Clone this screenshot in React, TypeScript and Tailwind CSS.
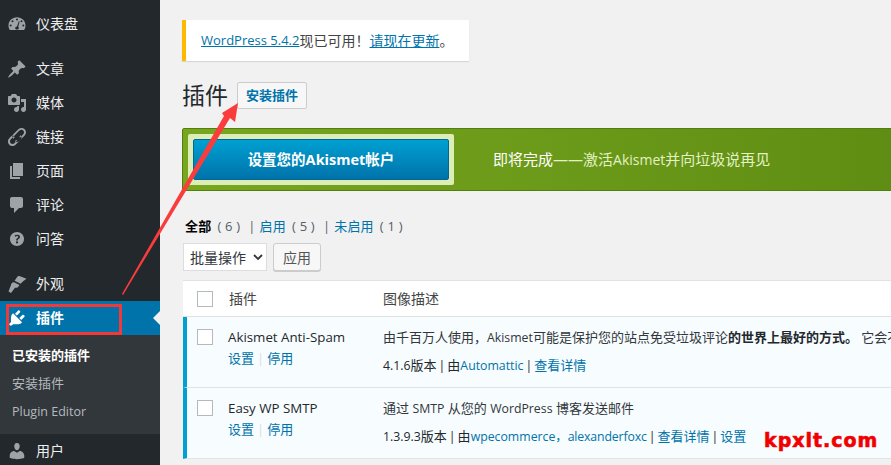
import type { ReactNode } from "react";

const font = { fontFamily: '"Open Sans","Noto Sans CJK SC",sans-serif' };

const icons: Record<string, ReactNode> = {
  dashboard: (
    <path
      fillRule="evenodd"
      d="M10 3.2c-4.7 0-8.5 3.6-8.5 8.2 0 1.7.5 3.2 1.4 4.5h14.2c.9-1.300 1.400-2.800 1.400-4.500 0-4.600-3.800-8.200-8.500-8.200zM10 4.500a1 1 0 110 2 1 1 0 010-2zM5.500 6.300a1 1 0 110 2 1 1 0 010-2zM14.500 6.300a1 1 0 110 2 1 1 0 010-2zM3.700 10.500a1 1 0 110 2 1 1 0 010-2zM16.300 10.500a1 1 0 110 2 1 1 0 010-2zM11.800 7.200l.9.4-1.500 5.200c.4.400.6.800.6 1.300 0 1-.8 1.500-1.800 1.500s-1.800-.5-1.800-1.500c0-.9.700-1.600 1.800-1.700z"
    />
  ),
  post: <path d="M10.440 3.020l1.820-1.820 6.360 6.350-1.830 1.820c-1.050-.68-2.480-.57-3.410.35l-.92.92c-.93.93-1.040 2.350-.35 3.400l-1.830 1.820-2.410-2.410-2.800 2.790c-.42.42-3.380 2.710-3.800 2.290s1.860-3.390 2.280-3.810l2.790-2.790L4.100 9.460l1.830-1.820c1.050.69 2.470.58 3.400-.35l.92-.92c.93-.93 1.040-2.360.35-3.410z" />,
  media: <path d="M13 11V4c0-.55-.45-1-1-1h-1.670L9 1H5L3.670 3H2c-.55 0-1 .45-1 1v7c0 .55.45 1 1 1h10c.55 0 1-.45 1-1zM7 4.500c1.380 0 2.500 1.120 2.500 2.500S8.380 9.500 7 9.500 4.500 8.380 4.500 7 5.620 4.500 7 4.500zM14 6h5v10.500c0 1.380-1.120 2.500-2.500 2.500S14 17.880 14 16.500s1.120-2.500 2.500-2.500c.17 0 .34.020.5.050V9h-3V6zm-4 8.050V13h2v3.500c0 1.380-1.120 2.500-2.500 2.500S7 17.880 7 16.500 8.120 14 9.500 14c.17 0 .34.020.5.050z" />,
  link: (
    <path
      fillRule="evenodd"
      d="M17.700 2.300c-1.900-1.900-4.700-1.700-6.600.2L6.300 7.300c-1.200 1.200-1.300 3.300 0 4.500l1.300-1.300c-.6-.7-.6-1.500 0-2.100l4.800-4.800c1.100-1.100 2.800-1.300 3.900-.2 1.100 1.200.9 2.900-.2 4l-5.300 5.300c-.6.600-1.200.7-1.700.3l-1.300 1.300c1.300 1.100 3.200.9 4.400-.3l5.300-5.300c1.900-1.900 2.100-4.500.2-6.400zM13.700 8.200c1.200 1.200 1.100 3.300-.1 4.500l-4.800 4.800c-1.900 1.900-4.700 2.100-6.600.2s-1.600-4.800.3-6.700l3-3 1.400 1.300-3 3c-1.100 1.100-1.300 2.800-.2 4 1.100 1.100 2.800.9 3.900-.2l4.800-4.800c.6-.6.600-1.400 0-2.100z"
    />
  ),
  page: <path d="M6 15V2h10v13H6zm-1 1h8v2H3V5h2v11z" />,
  comment: <path d="M5 2h9c1.100 0 2 .9 2 2v7c0 1.100-.9 2-2 2h-2l-5 5v-5H5c-1.100 0-2-.9-2-2V4c0-1.100.9-2 2-2z" />,
  help: <path d="M17 10c0-3.870-3.140-7-7-7-3.870 0-7 3.130-7 7 0 3.860 3.130 7 7 7 3.860 0 7-3.140 7-7zm-6.300 1.480H9.140v-.43c0-.38.08-.7.24-.98s.46-.57.88-.89c.41-.29.68-.53.81-.71.14-.18.2-.39.2-.62 0-.25-.09-.44-.28-.58-.19-.13-.45-.19-.79-.19-.58 0-1.250.19-2 .57l-.64-1.280c.87-.49 1.800-.74 2.770-.74.81 0 1.450.2 1.920.58.48.39.71.91.71 1.550 0 .44-.1.81-.3 1.120-.19.32-.57.67-1.110 1.060-.38.28-.61.49-.71.63-.1.15-.14.34-.14.59v.32zm-1.420 2.650c-.18-.18-.28-.43-.28-.75 0-.33.09-.59.27-.76s.44-.26.79-.26c.34 0 .6.09.78.27.18.18.27.43.27.75 0 .31-.09.56-.28.74-.18.19-.44.28-.77.28-.34 0-.6-.09-.78-.27z" />,
  appearance: <path d="M19.500 4.800L13 2.200c-1.300-.4-2.400.1-3 1L7.600 6.800 13.700 9.800l2.100-2.300zM7 8.300c-1.600-.1-2.700 1-3 2.600L1.500 17.500 4 19l4-5.300c1.300.4 2.700 0 3.700-1.400l.8-1.200z" />,
  plugin: <path d="M13.110 4.360L9.870 7.600 8 5.730l3.240-3.240c.35-.34 1.050-.2 1.560.32.52.51.66 1.210.31 1.550zm-8 1.770l.91-.91 9.010 9.010-.91.91c-.71.710-2.630 1.160-3.820 1.160H6.140L4.900 17.260c-.59.590-1.540.59-2.120 0-.59-.58-.59-1.530 0-2.120l1.240-1.240v-4.160c0-1.130.4-3.050 1.090-3.610zm7.260 3.970l3.240-3.240c.34-.35 1.040-.21 1.550.31.52.51.66 1.210.31 1.550l-3.240 3.250z" />,
  users: <path d="M10 9.250c-2.270 0-2.730-3.440-2.730-3.440C7 4.020 7.820 2 9.970 2c2.160 0 2.980 2.020 2.710 3.810 0 0-.41 3.440-2.680 3.440zm0 2.570L12.720 10c2.390 0 4.520 2.330 4.520 4.530v2.490s-3.650 1.130-7.240 1.130c-3.650 0-7.240-1.130-7.240-1.130v-2.490c0-2.250 1.940-4.530 4.430-4.530z" />,
};

function Icon({ name, className }: { name: string; className: string }) {
  return (
    <svg viewBox="0 0 20 20" className={className} fill="currentColor">
      {icons[name]}
    </svg>
  );
}

// the reference sets Chinese slightly larger than the latin next to it
function Zh({ children }: { children: ReactNode }) {
  return <span className="text-[13px]">{children}</span>;
}

function En({ children }: { children: ReactNode }) {
  return <span className="text-[12.3px]">{children}</span>;
}

function Sep() {
  return <span className="mx-[2px]">|</span>;
}

function MenuItem({ icon, label, mt }: { icon: string; label: string; mt?: string }) {
  return (
    <div className={`flex h-[34px] shrink-0 items-center text-[14px] text-[#eeeeee] ${mt ?? ""}`}>
      <Icon name={icon} className="ml-[7px] mr-[9px] h-[20px] w-[20px] text-[#9ea3a8]" />
      <span className="pb-[2px]">{label}</span>
    </div>
  );
}

function Sidebar() {
  return (
    <aside className="flex h-full w-[160px] shrink-0 flex-col bg-[#23282d] pt-[7px]">
      <MenuItem icon="dashboard" label="仪表盘" />
      <MenuItem icon="post" label="文章" mt="mt-[11px]" />
      <MenuItem icon="media" label="媒体" />
      <MenuItem icon="link" label="链接" />
      <MenuItem icon="page" label="页面" />
      <MenuItem icon="comment" label="评论" />
      <MenuItem icon="help" label="问答" />
      <MenuItem icon="appearance" label="外观" mt="mt-[11px]" />
      <div className="relative flex h-[34px] shrink-0 items-center bg-[#0073aa] text-[14px] font-bold text-white">
        <Icon name="plugin" className="ml-[7px] mr-[9px] h-[20px] w-[20px] text-white" />
        <span className="pb-[2px]">插件</span>
        <span className="absolute right-0 top-[10px] h-0 w-0 border-y-[7px] border-r-[7px] border-y-transparent border-r-[#f1f1f1]" />
      </div>
      <div className="flex h-[99px] shrink-0 flex-col bg-[#32373c] pl-[12px] pt-[6px] text-[13px] leading-[28px] text-[#b4b9be]">
        <span className="font-bold text-white">已安装的插件</span>
        <span>安装插件</span>
        <span className="mt-[1px] text-[12.5px]">Plugin Editor</span>
      </div>
      <MenuItem icon="users" label="用户" />
    </aside>
  );
}

function Checkbox() {
  return <span className="block h-[16px] w-[16px] shrink-0 border border-[#b4b9be] bg-white" />;
}

function PluginRow({
  name,
  desc,
  meta,
}: {
  name: string;
  desc: ReactNode;
  meta: ReactNode;
}) {
  return (
    <div className="flex h-[71px] border-b border-[#e1e4e8] border-l-4 border-l-[#00a0d2] bg-[#f7fcfe]">
      <div className="ml-[10px] mt-[12px]">
        <Checkbox />
      </div>
      <div className="ml-[15px] w-[155px] shrink-0 pt-[10px]">
        <div className="text-[13.3px] font-medium leading-[20px] text-[#23282d]">{name}</div>
        <div className="mt-[1px] flex items-center text-[13px] leading-[20px] text-[#0073aa]">
          设置<span className="mx-[3px] text-[#ddd]">|</span>停用
        </div>
      </div>
      <div className="whitespace-nowrap pt-[10px] text-[13px] text-[#32373c]">
        <div className="leading-[20px]">{desc}</div>
        <div className="mt-[7px] text-[12.3px] leading-[20px] text-[#23282d]">{meta}</div>
      </div>
    </div>
  );
}

export default function App() {
  return (
    <div
      className="relative flex h-[465px] w-[891px] overflow-hidden bg-[#f1f1f1] text-[13px] text-[#444]"
      style={font}
    >
      <Sidebar />
      <main className="flex min-w-0 flex-1 flex-col pl-[22px] pt-[20px]">
        <div className="flex h-[41px] w-[287px] shrink-0 items-center border-l-4 border-l-[#ffb900] bg-white pl-[15px] text-[13px] shadow-[0_1px_1px_rgba(0,0,0,0.1)]">
          <a className="text-[#0073aa] underline">WordPress 5.4.2</a>
          <span className="text-[14px]">现已可用！</span>
          <a className="text-[14px] text-[#0073aa] underline">请现在更新</a>
          <span className="text-[14px]">。</span>
        </div>

        <div className="mt-[21px] flex h-[27px] shrink-0 items-center">
          <h1 className="text-[23px] font-normal text-[#23282d]">插件</h1>
          <span className="ml-[9px] flex h-[27px] w-[70px] items-center justify-center rounded-[2px] border border-[#cccccc] bg-[#f7f7f7] text-[13px] font-semibold text-[#0073aa]">
            安装插件
          </span>
        </div>

        <div className="mt-[19px] flex h-[63px] w-[720px] shrink-0 items-center rounded-[2px] border border-[#4f800d] bg-gradient-to-r from-[#78a61f] to-[#5f8d13] pl-[5px]">
          <div className="rounded-[2px] bg-[#dcedb8] p-[5px]">
            <div className="flex h-[41px] w-[256px] items-center justify-center rounded-[2px] border border-[#006799] bg-gradient-to-b from-[#00a0d2] to-[#0073aa] text-[14.5px] font-bold text-white">
              设置您的Akismet帐户
            </div>
          </div>
          <div className="ml-[39px] text-[15px] text-[#e3f1c5]">
            <span className="text-white">即将完成</span>——激活<span className="text-[14px]">Akismet</span>并向垃圾说再见
          </div>
        </div>

        <div className="ml-[3px] mt-[27px] flex h-[18px] shrink-0 items-center text-[13px] tracking-[0.2px] text-[#555d66]">
          <b className="font-bold text-black">全部</b>
          <span className="ml-[6px]">( 6 )</span>
          <span className="ml-[8px]">|</span>
          <a className="ml-[4px] text-[#0073aa]">启用</a>
          <span className="ml-[6px]">( 5 )</span>
          <span className="ml-[8px]">|</span>
          <a className="ml-[4px] text-[#0073aa]">未启用</a>
          <span className="ml-[6px]">( 1 )</span>
        </div>

        <div className="ml-[1px] mt-[7px] flex h-[28px] shrink-0 gap-[6px]">
          <span className="flex w-[84px] items-center justify-between border border-[#dddddd] bg-white pl-[6px] pr-[3px] text-[14px] text-[#32373c]">
            批量操作
            <svg viewBox="0 0 10 10" className="h-[10px] w-[10px]" fill="none" stroke="#32373c" strokeWidth="1.8">
              <path d="M1 3l4 4 4-4" />
            </svg>
          </span>
          <span className="flex w-[48px] items-center justify-center rounded-[3px] border border-[#cccccc] bg-[#f7f7f7] text-[14px] text-[#555] shadow-[0_1px_0_#cccccc]">
            应用
          </span>
        </div>

        <div className="ml-[1px] mt-[9px] flex w-[720px] flex-col">
          <div className="flex h-[37px] items-center border-y border-[#e1e1e1] bg-white">
            <div className="ml-[14px]">
              <Checkbox />
            </div>
            <span className="ml-[16px] w-[154px] text-[14px]">插件</span>
            <span className="text-[14px]">图像描述</span>
          </div>
          <PluginRow
            name="Akismet Anti-Spam"
            desc={
              <>
                由千百万人使用，<En>Akismet</En>可能是保护您的站点免受垃圾评论<b className="font-bold text-[#23282d]">的世界上最好的方式。</b> 它会不断地
              </>
            }
            meta={
              <>
                4.1.6<Zh>版本</Zh><Sep /><Zh>由</Zh><a className="text-[#0073aa]">Automattic</a><Sep /><a className="text-[#0073aa]"><Zh>查看详情</Zh></a>
              </>
            }
          />
          <PluginRow
            name="Easy WP SMTP"
            desc={
              <>
                通过 <En>SMTP</En> 从您的 <En>WordPress</En> 博客发送邮件
              </>
            }
            meta={
              <>
                1.3.9.3<Zh>版本</Zh><Sep /><Zh>由</Zh><a className="text-[#0073aa]">wpecommerce，<span className="tracking-[-0.15px]">alexanderfoxc</span></a><Sep /><a className="text-[#0073aa]"><Zh>查看详情</Zh></a><Sep /><a className="text-[#0073aa]"><Zh>设置</Zh></a>
              </>
            }
          />
        </div>
      </main>

      {/* annotations drawn on top of the screenshot */}
      <span className="absolute left-[6px] top-[304px] h-[31px] w-[116px] border-[3px] border-[#f03a3a]" />
      <svg className="absolute left-0 top-0 h-[465px] w-[891px]" viewBox="0 0 891 465">
        <polygon points="238,103 235,122 230,118 123,295 122,294 224,116 222,113" fill="#fb3c3c" />
      </svg>
      <span
        className="absolute left-[764px] top-[427px] text-[19px] font-bold leading-[26px] tracking-[1px] text-[#f00000] [-webkit-text-stroke:0.6px_#f00000]"
        style={{ fontFamily: '"DejaVu Sans",sans-serif' }}
      >
        kpxlt.com
      </span>
    </div>
  );
}
